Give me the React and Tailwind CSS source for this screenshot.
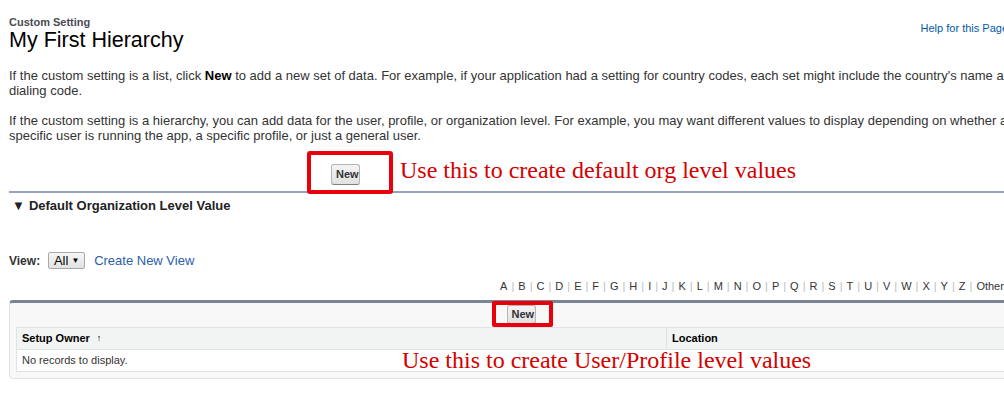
import React from 'react';

const letters = ['A', 'B', 'C', 'D', 'E', 'F', 'G', 'H', 'I', 'J', 'K', 'L', 'M', 'N', 'O', 'P', 'Q', 'R', 'S', 'T', 'U', 'V', 'W', 'X', 'Y', 'Z', 'Other', 'All'];

const SfButton = ({ className = '' }) => (
  <button
    className={`rounded-[3px] border border-[#b5b5b5] border-b-[#7f7f7f] bg-gradient-to-b from-[#f4f4f4] to-[#e1e1e1] px-[4px] text-[11px] font-bold text-[#333] ${className}`}
  >
    New
  </button>
);

const App = () => {
  return (
    <div
      className="relative h-[394px] w-[1004px] overflow-hidden bg-white text-[#333]"
      style={{ fontFamily: '"Liberation Sans", Arial, sans-serif' }}
    >
      <div className="ml-[9px] w-[1024px]">
        {/* Page header */}
        <div className="flex items-start justify-between pt-[16px]">
          <div>
            <div className="text-[11px] font-bold leading-[13px] text-[#4a4a56]">Custom Setting</div>
            <h1 className="-mt-[1px] text-[21.5px] leading-[24px] text-black">My First Hierarchy</h1>
          </div>
          <a className="mr-[5px] mt-[4px] flex items-center gap-[4px] text-[11px] leading-[13px] text-[#015ba7]">
            Help for this Page
            <span className="flex h-[16px] w-[16px] items-center justify-center rounded-full bg-[#f3a12e] text-[10px] font-bold text-white">?</span>
          </a>
        </div>

        {/* Description */}
        <p className="mt-[16px] text-[13px] leading-[15px]">
          If the custom setting is a list, click <b className="text-black">New</b> to add a new set of data. For example, if your application had a setting for country codes, each set might include the country's name and dialing code.
        </p>
        <p className="mt-[15px] text-[13px] leading-[15px]">
          If the custom setting is a hierarchy, you can add data for the user, profile, or organization level. For example, you may want different values to display depending on whether a specific user is running the app, a specific profile, or just a general user.
        </p>

        {/* Top button */}
        <div className="mt-[21px] flex h-[21px] pl-[322px]">
          <SfButton className="h-[21px] w-[29px]" />
        </div>
        <div className="mt-[6px] h-[2px] bg-[#95a3bf]" />

        {/* Section header */}
        <div className="mt-[5px] flex items-center text-[13px] font-bold leading-[15px] text-[#222]">
          <span className="ml-[3px] mr-[4px] text-[13px]">▼</span>
          Default Organization Level Value
        </div>

        {/* View selector */}
        <div className="mt-[39px] flex h-[17px] items-center">
          <span className="text-[12px] font-bold text-[#333]">View:</span>
          <div className="ml-[8px] flex h-[17px] w-[37px] items-center justify-center gap-[3px] rounded-[2px] border border-[#a9a9a9] bg-gradient-to-b from-[#f6f6f6] to-[#e2e2e2] text-[13px] text-black">
            All<span className="text-[8px]">▼</span>
          </div>
          <a className="ml-[9px] text-[13px] text-[#2a5ea8]">Create New View</a>
        </div>

        {/* Rolodex */}
        <div className="mt-[11px] flex justify-end pr-[6px] text-[11px] leading-[13px] text-[#333]">
          {letters.map((l, i) => (
            <span key={l} className="flex">
              {i > 0 && <span className="mx-[4px] text-[#bbb]">|</span>}
              <span>{l}</span>
            </span>
          ))}
        </div>

        {/* List */}
        <div className="mt-[7px] rounded-[4px] border border-t-[3px] border-[#e0e3e5] border-t-[#7b8397] bg-[#f8f8f8] px-[6px] pb-[6px]">
          <div className="flex h-[24px] items-start justify-center pt-[2px]">
            <SfButton className="h-[19px] w-[29px]" />
          </div>
          <div className="border border-[#e0e3e5] bg-white text-[11px]">
            <div className="grid h-[22px] grid-cols-[650px_1fr] border-b border-[#e0e3e5] bg-[#f2f3f3] font-bold text-black">
              <div className="flex items-center border-r border-[#e0e3e5] pl-[5px]">
                Setup Owner <span className="ml-[7px] text-[9px] font-normal">↑</span>
              </div>
              <div className="flex items-center pl-[5px]">Location</div>
            </div>
            <div className="flex h-[21px] items-center pl-[5px] text-[#333]">No records to display.</div>
          </div>
        </div>
      </div>

      {/* Annotations */}
      <div className="absolute left-[307px] top-[151px] h-[43px] w-[86px] rounded-[3px] border-[4px] border-[#e8000b]" />
      <div
        className="absolute left-[400px] top-[157px] whitespace-nowrap text-[24px] leading-[26px] text-[#d40000]"
        style={{ fontFamily: '"Liberation Serif", "Times New Roman", serif' }}
      >
        Use this to create default org level values
      </div>
      <div className="absolute left-[492px] top-[301px] h-[26px] w-[61px] rounded-[2px] border-[4px] border-[#e8000b]" />
      <div
        className="absolute left-[402px] top-[347px] whitespace-nowrap text-[24px] leading-[26px] text-[#d40000]"
        style={{ fontFamily: '"Liberation Serif", "Times New Roman", serif' }}
      >
        Use this to create User/Profile level values
      </div>
    </div>
  );
};

export default App;
